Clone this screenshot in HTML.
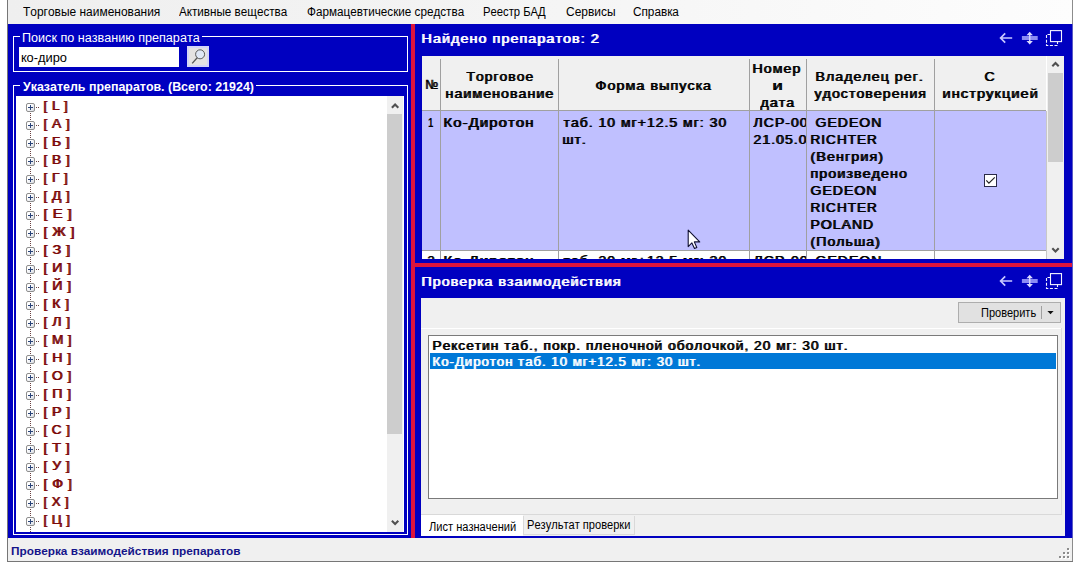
<!DOCTYPE html>
<html lang="ru">
<head>
<meta charset="utf-8">
<title>Проверка взаимодействия препаратов</title>
<style>
html,body{margin:0;padding:0;background:#fff;}
body{width:1079px;height:568px;position:relative;overflow:hidden;font-family:"Liberation Sans", sans-serif;color:#000;}
div,span,svg{position:absolute;}
.t{white-space:pre;transform-origin:0 0;font-kerning:none;}
.clip{overflow:hidden;}
.gb{border:1px solid #fff;box-sizing:border-box;}
.pm{left:10px;width:9px;height:9px;box-sizing:border-box;border:1px solid #8e8e8e;border-radius:2px;background:linear-gradient(135deg,#fff 30%,#d8dce4 100%);}
.pm:before{content:"";position:absolute;left:1px;top:3px;width:5px;height:1px;background:#2a4478;}
.pm:after{content:"";position:absolute;left:3px;top:1px;width:1px;height:5px;background:#2a4478;}
.dh{left:20px;width:3px;height:1px;background:linear-gradient(to right,#6a4040 0,#6a4040 1px,transparent 1px,transparent 2px,#6a4040 2px);}
.dv{left:14px;width:1px;height:9px;background:repeating-linear-gradient(to bottom,transparent 0,transparent 1px,#6a4040 1px,#6a4040 2px);}
.vl{width:1px;background:#a0a0a0;}
.hl{height:1px;background:#a0a0a0;}
</style>
</head>
<body>

<div style="left:7px;top:0;width:1px;height:562px;background:#767676"></div>
<div style="left:8px;top:0;width:1064px;height:24px;background:linear-gradient(to right,#efefef 0%,#f3f3f3 40%,#fdfdfd 100%)"></div>
<div style="left:1072px;top:0;width:1px;height:562px;background:#8c8c8c"></div>
<div style="left:7px;top:561px;width:1066px;height:1px;background:#767676"></div>
<div style="left:8px;top:24px;width:1064px;height:514px;background:#0000c0"></div>
<div style="left:8px;top:538px;width:1064px;height:23px;background:#f0f0f0"></div>
<div style="left:1068px;top:549px;width:2px;height:2px;background:#fff"></div><div style="left:1067px;top:548px;width:2px;height:2px;background:#8c8c8c"></div><div style="left:1064px;top:553px;width:2px;height:2px;background:#fff"></div><div style="left:1063px;top:552px;width:2px;height:2px;background:#8c8c8c"></div><div style="left:1068px;top:553px;width:2px;height:2px;background:#fff"></div><div style="left:1067px;top:552px;width:2px;height:2px;background:#8c8c8c"></div><div style="left:1060px;top:557px;width:2px;height:2px;background:#fff"></div><div style="left:1059px;top:556px;width:2px;height:2px;background:#8c8c8c"></div><div style="left:1064px;top:557px;width:2px;height:2px;background:#fff"></div><div style="left:1063px;top:556px;width:2px;height:2px;background:#8c8c8c"></div><div style="left:1068px;top:557px;width:2px;height:2px;background:#fff"></div><div style="left:1067px;top:556px;width:2px;height:2px;background:#8c8c8c"></div>
<div style="left:1072px;top:24px;width:1px;height:514px;background:#5a5ac4"></div>
<div class="gb" style="left:13px;top:36px;width:395px;height:36px"></div>
<div style="left:20px;top:34px;width:182px;height:5px;background:#0000c0"></div>
<div style="left:19px;top:47px;width:160px;height:20px;background:#fff"></div>
<div style="left:187px;top:46px;width:22px;height:21px;background:#e4e2e2;border:2px solid #d4d4f8;box-sizing:border-box"></div>
<svg style="left:187px;top:46px" width="22" height="21" viewBox="0 0 22 21"><circle cx="13.1" cy="8.3" r="4.5" fill="#dfe7f6" stroke="#4c4c4c" stroke-width="0.9"/><path d="M10.2 11.8 L5.2 17.4" stroke="#555" stroke-width="1.3" fill="none"/></svg>
<div class="gb" style="left:13px;top:85px;width:395px;height:450px"></div>
<div style="left:20px;top:83px;width:236px;height:5px;background:#0000c0"></div>
<div style="left:16px;top:96px;width:388px;height:436px;background:#fff;overflow:hidden">
<div class="pm" style="top:7px"></div><div class="dh" style="top:11px"></div><div class="dv" style="top:16px"></div>
<div class="pm" style="top:25px"></div><div class="dh" style="top:29px"></div><div class="dv" style="top:34px"></div>
<div class="pm" style="top:43px"></div><div class="dh" style="top:47px"></div><div class="dv" style="top:52px"></div>
<div class="pm" style="top:61px"></div><div class="dh" style="top:65px"></div><div class="dv" style="top:70px"></div>
<div class="pm" style="top:79px"></div><div class="dh" style="top:83px"></div><div class="dv" style="top:88px"></div>
<div class="pm" style="top:97px"></div><div class="dh" style="top:101px"></div><div class="dv" style="top:106px"></div>
<div class="pm" style="top:115px"></div><div class="dh" style="top:119px"></div><div class="dv" style="top:124px"></div>
<div class="pm" style="top:133px"></div><div class="dh" style="top:137px"></div><div class="dv" style="top:142px"></div>
<div class="pm" style="top:151px"></div><div class="dh" style="top:155px"></div><div class="dv" style="top:160px"></div>
<div class="pm" style="top:169px"></div><div class="dh" style="top:173px"></div><div class="dv" style="top:178px"></div>
<div class="pm" style="top:187px"></div><div class="dh" style="top:191px"></div><div class="dv" style="top:196px"></div>
<div class="pm" style="top:205px"></div><div class="dh" style="top:209px"></div><div class="dv" style="top:214px"></div>
<div class="pm" style="top:223px"></div><div class="dh" style="top:227px"></div><div class="dv" style="top:232px"></div>
<div class="pm" style="top:241px"></div><div class="dh" style="top:245px"></div><div class="dv" style="top:250px"></div>
<div class="pm" style="top:259px"></div><div class="dh" style="top:263px"></div><div class="dv" style="top:268px"></div>
<div class="pm" style="top:277px"></div><div class="dh" style="top:281px"></div><div class="dv" style="top:286px"></div>
<div class="pm" style="top:295px"></div><div class="dh" style="top:299px"></div><div class="dv" style="top:304px"></div>
<div class="pm" style="top:313px"></div><div class="dh" style="top:317px"></div><div class="dv" style="top:322px"></div>
<div class="pm" style="top:331px"></div><div class="dh" style="top:335px"></div><div class="dv" style="top:340px"></div>
<div class="pm" style="top:349px"></div><div class="dh" style="top:353px"></div><div class="dv" style="top:358px"></div>
<div class="pm" style="top:367px"></div><div class="dh" style="top:371px"></div><div class="dv" style="top:376px"></div>
<div class="pm" style="top:385px"></div><div class="dh" style="top:389px"></div><div class="dv" style="top:394px"></div>
<div class="pm" style="top:403px"></div><div class="dh" style="top:407px"></div><div class="dv" style="top:412px"></div>
<div class="pm" style="top:421px"></div><div class="dh" style="top:425px"></div><div class="dv" style="top:430px"></div>
<div class="pm" style="top:439px"></div><div class="dh" style="top:443px"></div><div class="dv" style="top:448px"></div>
<span class="t" style="left:26.63px;top:1.00px;font-size:13.33px;line-height:17px;word-spacing:-1.20px;letter-spacing:1px;text-shadow:1px 0 0 currentColor;transform:scaleX(1.0206);color:#7c0808;">[ L ]</span>
<span class="t" style="left:26.61px;top:19.00px;font-size:13.33px;line-height:17px;word-spacing:-1.20px;letter-spacing:1px;text-shadow:1px 0 0 currentColor;transform:scaleX(1.0367);color:#7c0808;">[ А ]</span>
<span class="t" style="left:26.61px;top:37.00px;font-size:13.33px;line-height:17px;word-spacing:-1.20px;letter-spacing:1px;text-shadow:1px 0 0 currentColor;transform:scaleX(1.0428);color:#7c0808;">[ Б ]</span>
<span class="t" style="left:26.61px;top:55.00px;font-size:13.33px;line-height:17px;word-spacing:-1.20px;letter-spacing:1px;text-shadow:1px 0 0 currentColor;transform:scaleX(1.0367);color:#7c0808;">[ В ]</span>
<span class="t" style="left:26.62px;top:73.00px;font-size:13.33px;line-height:17px;word-spacing:-1.20px;letter-spacing:1px;text-shadow:1px 0 0 currentColor;transform:scaleX(1.0294);color:#7c0808;">[ Г ]</span>
<span class="t" style="left:26.62px;top:91.00px;font-size:13.33px;line-height:17px;word-spacing:-1.20px;letter-spacing:1px;text-shadow:1px 0 0 currentColor;transform:scaleX(1.0309);color:#7c0808;">[ Д ]</span>
<span class="t" style="left:26.54px;top:109.00px;font-size:13.33px;line-height:17px;word-spacing:-1.20px;letter-spacing:1px;text-shadow:1px 0 0 currentColor;transform:scaleX(1.1146);color:#7c0808;">[ Е ]</span>
<span class="t" style="left:26.58px;top:127.00px;font-size:13.33px;line-height:17px;word-spacing:-1.20px;letter-spacing:1px;text-shadow:1px 0 0 currentColor;transform:scaleX(1.0783);color:#7c0808;">[ Ж ]</span>
<span class="t" style="left:26.57px;top:145.00px;font-size:13.33px;line-height:17px;word-spacing:-1.20px;letter-spacing:1px;text-shadow:1px 0 0 currentColor;transform:scaleX(1.0864);color:#7c0808;">[ З ]</span>
<span class="t" style="left:26.59px;top:163.00px;font-size:13.33px;line-height:17px;word-spacing:-1.20px;letter-spacing:1px;text-shadow:1px 0 0 currentColor;transform:scaleX(1.0600);color:#7c0808;">[ И ]</span>
<span class="t" style="left:26.59px;top:181.00px;font-size:13.33px;line-height:17px;word-spacing:-1.20px;letter-spacing:1px;text-shadow:1px 0 0 currentColor;transform:scaleX(1.0600);color:#7c0808;">[ Й ]</span>
<span class="t" style="left:26.60px;top:199.00px;font-size:13.33px;line-height:17px;word-spacing:-1.20px;letter-spacing:1px;text-shadow:1px 0 0 currentColor;transform:scaleX(1.0568);color:#7c0808;">[ К ]</span>
<span class="t" style="left:26.60px;top:217.00px;font-size:13.33px;line-height:17px;word-spacing:-1.20px;letter-spacing:1px;text-shadow:1px 0 0 currentColor;transform:scaleX(1.0552);color:#7c0808;">[ Л ]</span>
<span class="t" style="left:26.63px;top:235.00px;font-size:13.33px;line-height:17px;word-spacing:-1.20px;letter-spacing:1px;text-shadow:1px 0 0 currentColor;transform:scaleX(1.0219);color:#7c0808;">[ М ]</span>
<span class="t" style="left:26.59px;top:253.00px;font-size:13.33px;line-height:17px;word-spacing:-1.20px;letter-spacing:1px;text-shadow:1px 0 0 currentColor;transform:scaleX(1.0581);color:#7c0808;">[ Н ]</span>
<span class="t" style="left:26.62px;top:271.00px;font-size:13.33px;line-height:17px;word-spacing:-1.20px;letter-spacing:1px;text-shadow:1px 0 0 currentColor;transform:scaleX(1.0355);color:#7c0808;">[ О ]</span>
<span class="t" style="left:26.59px;top:289.00px;font-size:13.33px;line-height:17px;word-spacing:-1.20px;letter-spacing:1px;text-shadow:1px 0 0 currentColor;transform:scaleX(1.0600);color:#7c0808;">[ П ]</span>
<span class="t" style="left:26.60px;top:307.00px;font-size:13.33px;line-height:17px;word-spacing:-1.20px;letter-spacing:1px;text-shadow:1px 0 0 currentColor;transform:scaleX(1.0490);color:#7c0808;">[ Р ]</span>
<span class="t" style="left:26.63px;top:325.00px;font-size:13.33px;line-height:17px;word-spacing:-1.20px;letter-spacing:1px;text-shadow:1px 0 0 currentColor;transform:scaleX(1.0183);color:#7c0808;">[ С ]</span>
<span class="t" style="left:26.58px;top:343.00px;font-size:13.33px;line-height:17px;word-spacing:-1.20px;letter-spacing:1px;text-shadow:1px 0 0 currentColor;transform:scaleX(1.0695);color:#7c0808;">[ Т ]</span>
<span class="t" style="left:26.60px;top:361.00px;font-size:13.33px;line-height:17px;word-spacing:-1.20px;letter-spacing:1px;text-shadow:1px 0 0 currentColor;transform:scaleX(1.0550);color:#7c0808;">[ У ]</span>
<span class="t" style="left:26.58px;top:379.00px;font-size:13.33px;line-height:17px;word-spacing:-1.20px;letter-spacing:1px;text-shadow:1px 0 0 currentColor;transform:scaleX(1.0683);color:#7c0808;">[ Ф ]</span>
<span class="t" style="left:26.65px;top:397.00px;font-size:13.33px;line-height:17px;word-spacing:-1.20px;letter-spacing:1px;text-shadow:1px 0 0 currentColor;transform:scaleX(0.9998);color:#7c0808;">[ Х ]</span>
<span class="t" style="left:26.64px;top:415.00px;font-size:13.33px;line-height:17px;word-spacing:-1.20px;letter-spacing:1px;text-shadow:1px 0 0 currentColor;transform:scaleX(1.0089);color:#7c0808;">[ Ц ]</span>
<span class="t" style="left:26.61px;top:433.00px;font-size:13.33px;line-height:17px;word-spacing:-1.20px;letter-spacing:1px;text-shadow:1px 0 0 currentColor;transform:scaleX(1.0411);color:#7c0808;">[ Ч ]</span>
</div>
<div style="left:387px;top:96px;width:17px;height:436px;background:#f0f0f0"><div style="left:0;top:18px;width:15px;height:320px;background:#cdcdcd"></div><svg style="left:0;top:0" width="17" height="18" viewBox="0 0 17 18"><path d="M4.9 11.8 L8.1 8.6 L11.3 11.8" stroke="#505050" stroke-width="2.1" fill="none"/></svg><svg style="left:0;top:418px" width="17" height="18" viewBox="0 0 17 18"><path d="M4.9 6.8 L8.1 10 L11.3 6.8" stroke="#505050" stroke-width="2.1" fill="none"/></svg></div>
<div style="left:403px;top:96px;width:1px;height:436px;background:#fff"></div>
<div style="left:411px;top:24px;width:4px;height:514px;background:#dc143c"></div>
<div style="left:411px;top:263px;width:661px;height:4px;background:#dc143c"></div>
<svg style="left:995px;top:26px" width="72" height="24" viewBox="0 0 72 24"><path d="M5.3 12 H17.2 M10.2 7.4 L5.6 12 L10.2 16.6" stroke="#c8c8ff" stroke-width="1.7" fill="none"/><rect x="26.9" y="10" width="15.8" height="4" fill="#8c8cf4"/><path d="M34.7 8 V16.2" stroke="#d4d4ff" stroke-width="1.5"/><path d="M31.5 9.2 L34.7 5.8 L37.9 9.2 Z M31.5 15 L34.7 18.4 L37.9 15 Z" fill="#dcdcff"/><rect x="55.5" y="4.6" width="11" height="11" fill="none" stroke="#f4f4ff" stroke-width="1.1"/><path d="M55.5 8.5 H51.5 V19.5 H62.5 V15.6" fill="none" stroke="#f4f4ff" stroke-width="1.1" stroke-dasharray="3 1.6"/></svg>
<svg style="left:995px;top:269px" width="72" height="24" viewBox="0 0 72 24"><path d="M5.3 12 H17.2 M10.2 7.4 L5.6 12 L10.2 16.6" stroke="#c8c8ff" stroke-width="1.7" fill="none"/><rect x="26.9" y="10" width="15.8" height="4" fill="#8c8cf4"/><path d="M34.7 8 V16.2" stroke="#d4d4ff" stroke-width="1.5"/><path d="M31.5 9.2 L34.7 5.8 L37.9 9.2 Z M31.5 15 L34.7 18.4 L37.9 15 Z" fill="#dcdcff"/><rect x="55.5" y="4.6" width="11" height="11" fill="none" stroke="#f4f4ff" stroke-width="1.1"/><path d="M55.5 8.5 H51.5 V19.5 H62.5 V15.6" fill="none" stroke="#f4f4ff" stroke-width="1.1" stroke-dasharray="3 1.6"/></svg>
<div style="left:422px;top:56px;width:642px;height:203px;background:#fff;overflow:hidden">
<div style="left:0;top:0;width:624px;height:55px;background:#f0f0f0"></div>
<div style="left:0;top:55px;width:624px;height:139px;background:#c0c0ff"></div>
<div class="hl" style="left:0;top:54px;width:624px"></div>
<div class="hl" style="left:0;top:194px;width:624px"></div>
<div class="vl" style="left:18px;top:3px;height:51px"></div>
<div class="vl" style="left:18px;top:55px;height:148px"></div>
<div class="vl" style="left:136px;top:3px;height:51px"></div>
<div class="vl" style="left:136px;top:55px;height:148px"></div>
<div class="vl" style="left:327px;top:3px;height:51px"></div>
<div class="vl" style="left:327px;top:55px;height:148px"></div>
<div class="vl" style="left:384px;top:3px;height:51px"></div>
<div class="vl" style="left:384px;top:55px;height:148px"></div>
<div class="vl" style="left:512px;top:3px;height:51px"></div>
<div class="vl" style="left:512px;top:55px;height:148px"></div>
<div class="vl" style="left:624px;top:55px;height:148px;background:#c8c8c8"></div>
<span class="t" style="left:3.20px;top:20.00px;font-size:13.33px;line-height:17px;letter-spacing:1px;text-shadow:1px 0 0 currentColor;transform:scaleX(0.8951);">№</span>
<span class="t" style="left:44.29px;top:12.00px;font-size:13.33px;line-height:17px;letter-spacing:1px;text-shadow:1px 0 0 currentColor;transform:scaleX(1.0395);">Торговое</span>
<span class="t" style="left:22.82px;top:29.00px;font-size:13.33px;line-height:17px;letter-spacing:1px;text-shadow:1px 0 0 currentColor;transform:scaleX(1.0638);">наименование</span>
<span class="t" style="left:172.98px;top:21.00px;font-size:13.33px;line-height:17px;letter-spacing:1px;text-shadow:1px 0 0 currentColor;transform:scaleX(1.0720);">Форма выпуска</span>
<span class="t" style="left:330.34px;top:4.00px;font-size:13.33px;line-height:17px;letter-spacing:1px;text-shadow:1px 0 0 currentColor;transform:scaleX(1.0613);">Номер</span>
<span class="t" style="left:350.37px;top:21.00px;font-size:13.33px;line-height:17px;letter-spacing:1px;text-shadow:1px 0 0 currentColor;transform:scaleX(1.3338);">и</span>
<span class="t" style="left:338.26px;top:38.00px;font-size:13.33px;line-height:17px;letter-spacing:1px;text-shadow:1px 0 0 currentColor;transform:scaleX(1.0620);">дата</span>
<span class="t" style="left:393.14px;top:12.00px;font-size:13.33px;line-height:17px;letter-spacing:1px;text-shadow:1px 0 0 currentColor;transform:scaleX(1.0602);">Владелец рег.</span>
<span class="t" style="left:392.47px;top:29.00px;font-size:13.33px;line-height:17px;letter-spacing:1px;text-shadow:1px 0 0 currentColor;transform:scaleX(1.0576);">удостоверения</span>
<span class="t" style="left:562.28px;top:12.00px;font-size:13.33px;line-height:17px;letter-spacing:1px;text-shadow:1px 0 0 currentColor;transform:scaleX(1.0591);">С</span>
<span class="t" style="left:519.59px;top:29.00px;font-size:13.33px;line-height:17px;letter-spacing:1px;text-shadow:1px 0 0 currentColor;transform:scaleX(1.0903);">инструкцией</span>
<span class="t" style="left:6.19px;top:58.00px;font-size:13.33px;line-height:17px;transform:scaleX(0.7255);font-weight:bold;">1</span>
<span class="t" style="left:21.38px;top:58.00px;font-size:13.33px;line-height:17px;letter-spacing:1px;text-shadow:1px 0 0 currentColor;transform:scaleX(1.1131);">Ко-Диротон</span>
<span class="t" style="left:141.16px;top:58.00px;font-size:13.33px;line-height:17px;letter-spacing:1px;text-shadow:1px 0 0 currentColor;transform:scaleX(1.0438);">таб. 10 мг+12.5 мг: 30</span>
<span class="t" style="left:140.45px;top:75.00px;font-size:13.33px;line-height:17px;letter-spacing:1px;text-shadow:1px 0 0 currentColor;transform:scaleX(1.0299);">шт.</span>
<div class="clip" style="left:328px;top:58.00px;width:56px;height:17px"><span class="t" style="left:3.48px;top:0;font-size:13.33px;line-height:17px;letter-spacing:1px;text-shadow:1px 0 0 currentColor;transform:scaleX(1.0500);">ЛСР-002</span></div>
<div class="clip" style="left:328px;top:75.00px;width:56px;height:17px"><span class="t" style="left:2.90px;top:0;font-size:13.33px;line-height:17px;letter-spacing:1px;text-shadow:1px 0 0 currentColor;transform:scaleX(1.0500);">21.05.09</span></div>
<span class="t" style="left:393.30px;top:58.00px;font-size:13.33px;line-height:17px;letter-spacing:1px;text-shadow:1px 0 0 currentColor;transform:scaleX(1.0481);">GEDEON</span>
<span class="t" style="left:387.99px;top:75.00px;font-size:13.33px;line-height:17px;letter-spacing:1px;text-shadow:1px 0 0 currentColor;transform:scaleX(1.0166);">RICHTER</span>
<span class="t" style="left:388.21px;top:92.00px;font-size:13.33px;line-height:17px;letter-spacing:1px;text-shadow:1px 0 0 currentColor;transform:scaleX(1.0744);">(Венгрия)</span>
<span class="t" style="left:388.11px;top:109.00px;font-size:13.33px;line-height:17px;letter-spacing:1px;text-shadow:1px 0 0 currentColor;transform:scaleX(1.0705);">произведено</span>
<span class="t" style="left:388.40px;top:126.00px;font-size:13.33px;line-height:17px;letter-spacing:1px;text-shadow:1px 0 0 currentColor;transform:scaleX(1.0498);">GEDEON</span>
<span class="t" style="left:387.99px;top:143.00px;font-size:13.33px;line-height:17px;letter-spacing:1px;text-shadow:1px 0 0 currentColor;transform:scaleX(1.0166);">RICHTER</span>
<span class="t" style="left:387.95px;top:160.00px;font-size:13.33px;line-height:17px;letter-spacing:1px;text-shadow:1px 0 0 currentColor;transform:scaleX(1.0476);">POLAND</span>
<span class="t" style="left:388.23px;top:177.00px;font-size:13.33px;line-height:17px;letter-spacing:1px;text-shadow:1px 0 0 currentColor;transform:scaleX(1.0546);">(Польша)</span>
<span class="t" style="left:4.96px;top:196.00px;font-size:13.33px;line-height:17px;letter-spacing:1px;text-shadow:1px 0 0 currentColor;transform:scaleX(0.9614);">2</span>
<span class="t" style="left:21.38px;top:196.00px;font-size:13.33px;line-height:17px;letter-spacing:1px;text-shadow:1px 0 0 currentColor;transform:scaleX(1.1131);">Ко-Диротон</span>
<span class="t" style="left:141.16px;top:196.00px;font-size:13.33px;line-height:17px;letter-spacing:1px;text-shadow:1px 0 0 currentColor;transform:scaleX(1.0438);">таб. 20 мг+12.5 мг: 30</span>
<div class="clip" style="left:328px;top:196.00px;width:56px;height:17px"><span class="t" style="left:3.48px;top:0;font-size:13.33px;line-height:17px;letter-spacing:1px;text-shadow:1px 0 0 currentColor;transform:scaleX(1.0500);">ЛСР-002</span></div>
<span class="t" style="left:393.30px;top:196.00px;font-size:13.33px;line-height:17px;letter-spacing:1px;text-shadow:1px 0 0 currentColor;transform:scaleX(1.0481);">GEDEON</span>
<div style="left:562px;top:118px;width:13px;height:13px;box-sizing:border-box;border:1px solid #2a2a48;background:#fff"></div>
<svg style="left:562px;top:118px" width="13" height="13" viewBox="0 0 13 13"><path d="M2.3 6.4 L4.9 9.2 L10.8 3.4" stroke="#222" stroke-width="1.2" fill="none"/></svg>
<div style="left:625px;top:0;width:17px;height:203px;background:#f0f0f0">
<div style="left:1px;top:17px;width:15px;height:89px;background:#cdcdcd"></div>
<svg style="left:0;top:0" width="17" height="17" viewBox="0 0 17 17"><path d="M5.3 10.3 L8.5 7.1 L11.7 10.3" stroke="#505050" stroke-width="2.1" fill="none"/></svg>
<svg style="left:0;top:186px" width="17" height="17" viewBox="0 0 17 17"><path d="M5.3 6.3 L8.5 9.5 L11.7 6.3" stroke="#505050" stroke-width="2.1" fill="none"/></svg>
</div>
</div>
<svg style="left:686px;top:228px" width="16" height="24" viewBox="0 0 16 24"><path d="M2.2 2.2 V18.6 L5.9 14.9 L8.5 20.5 L10.8 19.5 L8.3 13.9 H13.7 Z" fill="#fff" stroke="#101030" stroke-width="1.1" stroke-linejoin="round"/></svg>
<div style="left:421px;top:298px;width:644px;height:238px;background:#f0f0f0"></div>
<div style="left:958px;top:302px;width:103px;height:21px;box-sizing:border-box;border:1px solid #adadad;background:#e1e1e1"></div>
<div style="left:1041px;top:306px;width:1px;height:13px;background:#a0a0a0"></div>
<svg style="left:1046px;top:310px" width="9" height="6" viewBox="0 0 9 6"><path d="M1.4 1 H7.6 L4.5 4.2 Z" fill="#111"/></svg>
<div style="left:421px;top:328px;width:641px;height:1px;background:#fff"></div>
<div style="left:1061px;top:328px;width:1px;height:187px;background:#dcdcdc"></div>
<div style="left:421px;top:514px;width:641px;height:1px;background:#d9d9d9"></div>
<div style="left:428px;top:335px;width:630px;height:164px;box-sizing:border-box;border:1px solid #7a7a7a;background:#fff"></div>
<div style="left:430px;top:353px;width:626px;height:16px;background:#0078d7"></div>
<div style="left:421px;top:515px;width:102px;height:21px;background:#fff"></div>
<div style="left:523px;top:516px;width:112px;height:19px;box-sizing:border-box;border:1px solid #d9d9d9;border-top:none;background:#f0f0f0"></div>
<div style="left:421px;top:536px;width:651px;height:2px;background:#0000c0"></div>
<span class="t" style="left:23.33px;top:5.00px;font-size:12px;line-height:15px;transform:scaleX(0.9960);">Торговые наименования</span>
<span class="t" style="left:179.28px;top:5.00px;font-size:12px;line-height:15px;transform:scaleX(0.9739);">Активные вещества</span>
<span class="t" style="left:306.73px;top:5.00px;font-size:12px;line-height:15px;transform:scaleX(0.9744);">Фармацевтические средства</span>
<span class="t" style="left:483.28px;top:5.00px;font-size:12px;line-height:15px;transform:scaleX(0.9382);">Реестр БАД</span>
<span class="t" style="left:565.59px;top:5.00px;font-size:12px;line-height:15px;transform:scaleX(0.9984);">Сервисы</span>
<span class="t" style="left:633.00px;top:5.00px;font-size:12px;line-height:15px;transform:scaleX(0.9805);">Справка</span>
<span class="t" style="left:21.88px;top:31.00px;font-size:12.3px;line-height:15px;transform:scaleX(1.0251);color:#fff;">Поиск по названию препарата</span>
<span class="t" style="left:21.13px;top:51.00px;font-size:12.3px;line-height:15px;transform:scaleX(1.0445);">ко-диро</span>
<span class="t" style="left:22.89px;top:80.00px;font-size:12.3px;line-height:15px;transform:scaleX(1.0101);font-weight:bold;color:#fff;">Указатель препаратов. (Всего: 21924)</span>
<span class="t" style="left:420.83px;top:30.00px;font-size:13.33px;line-height:17px;letter-spacing:1px;text-shadow:1px 0 0 currentColor;transform:scaleX(1.0741);color:#fff;">Найдено препаратов: 2</span>
<span class="t" style="left:420.85px;top:273.00px;font-size:13.33px;line-height:17px;letter-spacing:1px;text-shadow:1px 0 0 currentColor;transform:scaleX(1.0643);color:#fff;">Проверка взаимодействия</span>
<span class="t" style="left:11.41px;top:544.00px;font-size:11.2px;line-height:14px;transform:scaleX(1.0549);font-weight:bold;color:#14148a;">Проверка взаимодействия препаратов</span>
<span class="t" style="left:428.70px;top:520.00px;font-size:12px;line-height:15px;transform:scaleX(0.9227);">Лист назначений</span>
<span class="t" style="left:527.49px;top:518.00px;font-size:12px;line-height:15px;transform:scaleX(0.9234);">Результат проверки</span>
<span class="t" style="left:980.61px;top:306.00px;font-size:12px;line-height:15px;transform:scaleX(0.9168);">Проверить</span>
<span class="t" style="left:431.88px;top:337.00px;font-size:13.33px;line-height:17px;letter-spacing:1px;text-shadow:1px 0 0 currentColor;transform:scaleX(1.0270);">Рексетин таб., покр. пленочной оболочкой, 20 мг: 30 шт.</span>
<span class="t" style="left:431.92px;top:353.00px;font-size:13.33px;line-height:17px;letter-spacing:1px;text-shadow:1px 0 0 currentColor;transform:scaleX(0.9899);color:#fff;">Ко-Диротон таб. 10 мг+12.5 мг: 30 шт.</span>
</body>
</html>
